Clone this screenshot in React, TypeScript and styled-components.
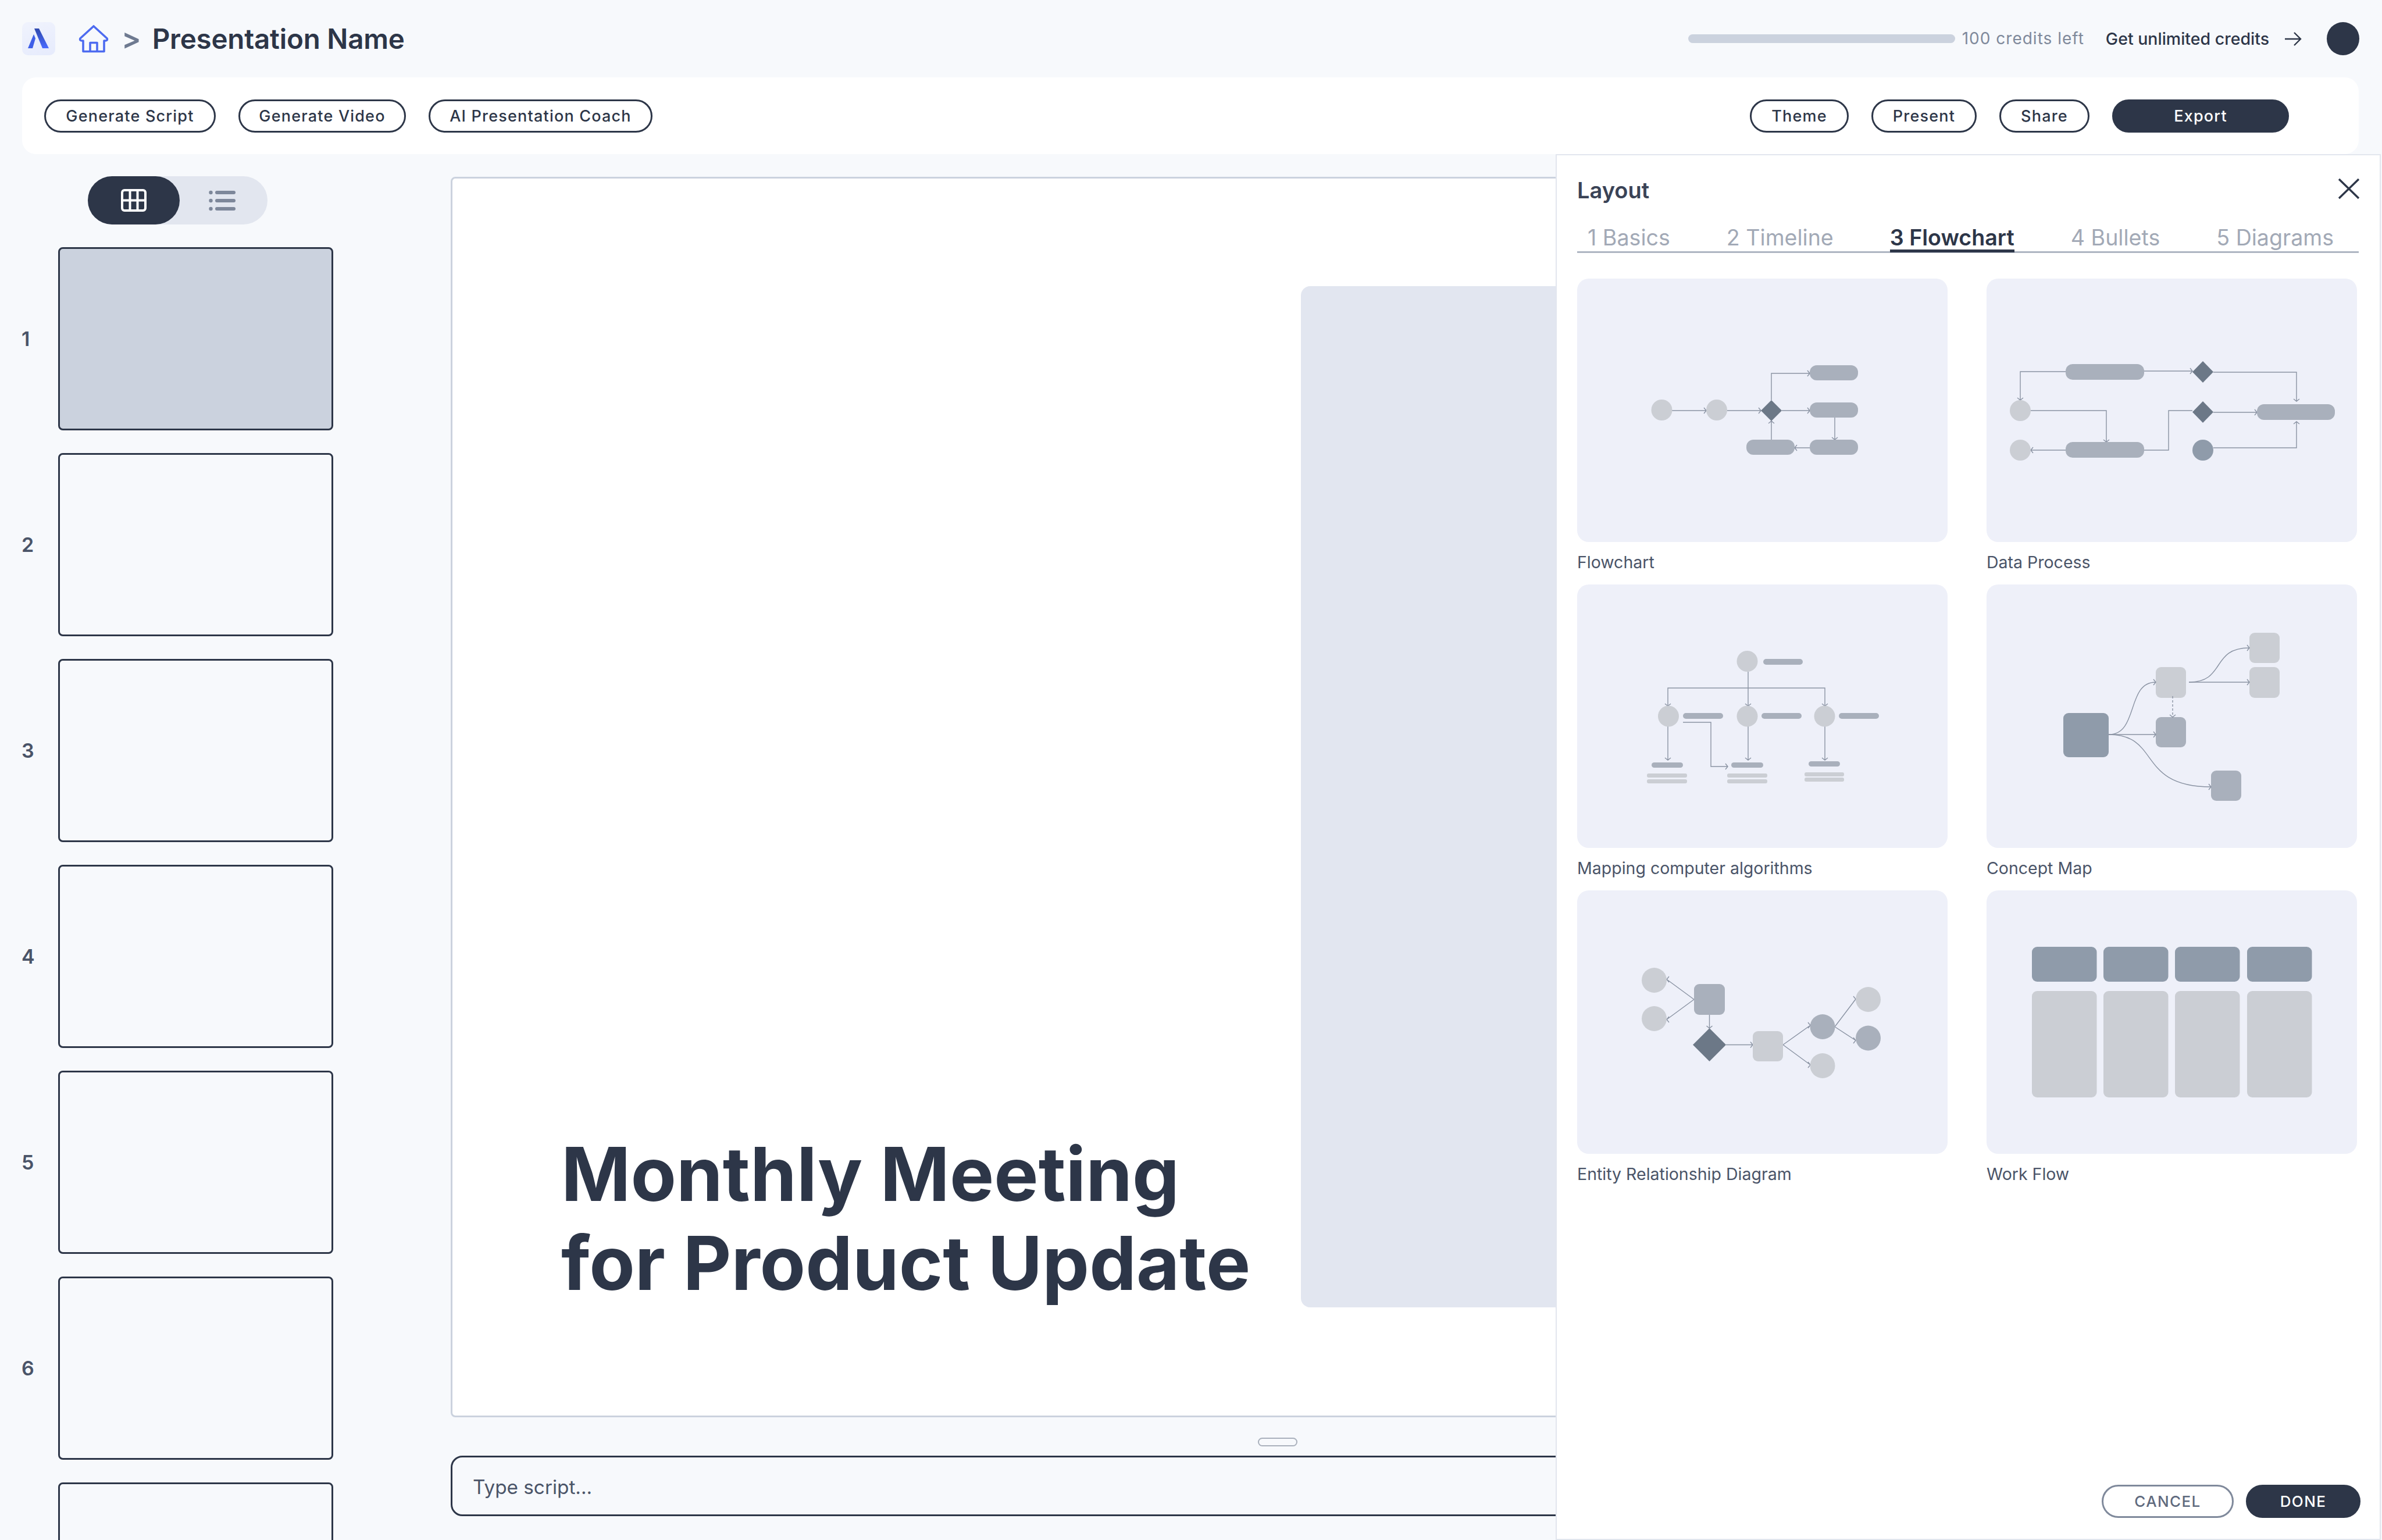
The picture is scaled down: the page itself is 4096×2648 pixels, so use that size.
import React from "react";
import styled, { createGlobalStyle } from "styled-components";

const INK = "#2d3648";
const LINE = "#8a93a3";
const FILL_LIGHT = "#cbced4";
const FILL_MID = "#a9b0bc";
const FILL_STEEL = "#8f9baa";
const FILL_DARK = "#6c7887";

const Global = createGlobalStyle`
  html, body { margin: 0; padding: 0; background: #f7f9fc; }
  body { font-family: Inter, "Noto Sans", sans-serif; color: ${INK}; }
  * { box-sizing: border-box; }
`;

const Page = styled.div`
  position: relative;
  width: 4096px;
  height: 2648px;
  overflow: hidden;
  background: #f7f9fc;
  display: flex;
  flex-direction: column;
`;

const Header = styled.header`
  height: 133px;
  padding: 38px 39px 0 38px;
  display: flex;
  align-items: flex-start;
  flex: none;
`;

const LogoBox = styled.div`
  width: 57px;
  height: 57px;
  border-radius: 10px;
  background: linear-gradient(160deg, #f0f3fd 0%, #e6ebfc 100%);
  margin-right: 40px;
  flex: none;
`;

const HomeMark = styled.svg`
  display: block;
  margin-top: 5px;
  flex: none;
`;

const Crumb = styled.span`
  color: #6e7a90;
  font-size: 50px;
  font-weight: 600;
  line-height: 57px;
  margin: 0 19px 0 22px;
`;

const Title = styled.h1`
  margin: 0;
  font-size: 47.5px;
  font-weight: 600;
  line-height: 57px;
  letter-spacing: -0.2px;
  color: ${INK};
`;

const Spacer = styled.div`
  flex: 1;
`;

const CreditBar = styled.div`
  width: 459px;
  height: 15px;
  margin: 21px 12px 0 0;
  border-radius: 8px;
  background: #cbd2de;
`;

const CreditText = styled.span`
  font-size: 28px;
  line-height: 57px;
  letter-spacing: 1px;
  color: #7f899b;
  margin-right: 37px;
`;

const UnlimitedLink = styled.a`
  font-size: 28.5px;
  font-weight: 500;
  line-height: 57px;
  color: ${INK};
  margin-right: 26px;
`;

const ArrowWrap = styled.div`
  width: 30px;
  height: 57px;
  display: flex;
  align-items: center;
  margin-right: 43px;
`;

const Avatar = styled.div`
  width: 56px;
  height: 57px;
  border-radius: 50%;
  background: ${INK};
`;

const Toolbar = styled.div`
  height: 132px;
  margin: 0 40px 0 38px;
  padding: 38px 120px 0 38px;
  background: #fff;
  border-radius: 24px;
  display: flex;
  align-items: flex-start;
  gap: 39px;
  flex: none;
`;

const PillButton = styled.button<{ $solid?: boolean; $width: number }>`
  width: ${(p) => p.$width}px;
  height: 57px;
  padding: 0;
  border: 3px solid ${INK};
  border-radius: 29px;
  background: ${(p) => (p.$solid ? INK : "#fff")};
  color: ${(p) => (p.$solid ? "#fff" : INK)};
  font-family: inherit;
  font-size: 27px;
  font-weight: 500;
  letter-spacing: 1.2px;
`;

const Main = styled.main`
  flex: 1;
  display: flex;
  min-height: 0;
`;

const Sidebar = styled.aside`
  width: 775px;
  flex: none;
  padding: 38px 0 0 0;
`;

const ViewToggle = styled.div`
  width: 309px;
  height: 83px;
  margin: 0 0 39px 151px;
  border-radius: 42px;
  background: #e2e6ef;
  display: flex;
`;

const ToggleSeg = styled.div<{ $active?: boolean }>`
  width: ${(p) => (p.$active ? 158 : 151)}px;
  height: 83px;
  padding-right: ${(p) => (p.$active ? 0 : 6)}px;
  border-radius: 42px;
  background: ${(p) => (p.$active ? INK : "transparent")};
  display: flex;
  align-items: center;
  justify-content: center;
`;

const SlideList = styled.div`
  display: flex;
  flex-direction: column;
  gap: 39px;
`;

const SlideRow = styled.div`
  display: flex;
  align-items: center;
  height: 315px;
  flex: none;
`;

const SlideNumber = styled.span`
  width: 100px;
  padding-left: 37px;
  font-size: 34px;
  font-weight: 600;
  color: #4a5468;
`;

const SlideThumb = styled.div<{ $active?: boolean }>`
  width: 473px;
  height: 315px;
  border: 3px solid ${INK};
  border-radius: 8px;
  background: ${(p) => (p.$active ? "#cbd2de" : "#f7f9fc")};
`;

const Stage = styled.section`
  width: 2844px;
  flex: none;
  padding-top: 39px;
  display: flex;
  flex-direction: column;
`;

const Canvas = styled.div`
  width: 2844px;
  height: 2133px;
  border: 3px solid #cbd2de;
  border-radius: 8px;
  background: #fff;
  display: flex;
  justify-content: space-between;
  padding: 185px 0 0 187px;
  flex: none;
`;

const Headline = styled.h2`
  margin: 0 0 186px 0;
  align-self: flex-end;
  font-size: 128.2px;
  line-height: 153px;
  font-weight: 700;
  color: ${INK};
`;

const HeroImage = styled.div`
  width: 1100px;
  height: 1756px;
  margin-right: 279px;
  border-radius: 16px;
  background: #e2e6f0;
`;

const Handle = styled.div`
  width: 68px;
  height: 15px;
  margin: 35px auto 16px;
  border: 2px solid #a9b0bc;
  border-radius: 8px;
`;

const ScriptBox = styled.div`
  height: 104px;
  border: 3px solid ${INK};
  border-radius: 20px;
  padding: 3px 0 0 35px;
  display: flex;
  align-items: center;
  font-size: 33.3px;
  color: #4a5468;
  background: #f7f9fc;
`;

const Panel = styled.aside`
  position: absolute;
  left: 2675px;
  top: 265px;
  width: 1419px;
  bottom: 0;
  background: #fff;
  border: 2px solid #e2e6ee;
  padding: 0 36px 0 35px;
  display: flex;
  flex-direction: column;
`;

const PanelHead = styled.div`
  display: flex;
  align-items: center;
  justify-content: space-between;
  height: 114px;
  padding-top: 6px;
`;

const PanelTitle = styled.h3`
  margin: 0;
  font-size: 38px;
  font-weight: 600;
  color: #3a4356;
`;

const CloseGlyph = styled.svg`
  display: block;
  margin: -6px -2px 0 0;
`;

const Tabs = styled.nav`
  height: 54px;
  margin-bottom: 44px;
  padding-left: 18px;
  border-bottom: 3px solid #aeb5c2;
  display: flex;
  gap: 97px;
`;

const Tab = styled.span<{ $active?: boolean }>`
  height: 53px;
  padding-top: 5px;
  font-size: 37.6px;
  line-height: 46px;
  font-weight: ${(p) => (p.$active ? 600 : 400)};
  color: ${(p) => (p.$active ? INK : "#a2a9b6")};
  border-bottom: ${(p) => (p.$active ? `5px solid ${INK}` : "none")};
`;

const Grid = styled.div`
  display: grid;
  grid-template-columns: 637px 637px;
  column-gap: 67px;
  row-gap: 0;
`;

const Card = styled.figure`
  margin: 0;
  height: 526px;
`;

const Thumb = styled.div`
  width: 637px;
  height: 453px;
  background: #eef0f9;
  border-radius: 20px;
`;

const ThumbSvg = styled.svg`
  display: block;
  width: 637px;
  height: 453px;
`;

const Caption = styled.figcaption`
  margin-top: 17px;
  font-size: 28.5px;
  line-height: 36px;
  color: #4a5468;
`;

const PanelFoot = styled.div`
  position: absolute;
  right: 33px;
  bottom: 36px;
  display: flex;
  gap: 21px;
`;

const FootButton = styled.button<{ $solid?: boolean; $width: number }>`
  width: ${(p) => p.$width}px;
  height: 57px;
  padding: 0;
  border: 3px solid ${(p) => (p.$solid ? INK : "#7f899b")};
  border-radius: 29px;
  background: ${(p) => (p.$solid ? INK : "#fff")};
  color: ${(p) => (p.$solid ? "#fff" : "#5f6a7e")};
  font-family: inherit;
  font-size: 26px;
  font-weight: 500;
  letter-spacing: 1.4px;
`;

type Arrow = { d: string; dash?: boolean };

const Wires = ({ items }: { items: Arrow[] }) => (
  <g fill="none" stroke={LINE} strokeWidth={1.4}>
    {items.map((a, i) => (
      <path key={i} d={a.d} strokeDasharray={a.dash ? "4 3" : undefined} />
    ))}
  </g>
);

const chevR = (x: number, y: number) => `M${x - 4} ${y - 5}L${x} ${y}L${x - 4} ${y + 5}`;
const chevL = (x: number, y: number) => `M${x + 4} ${y - 5}L${x} ${y}L${x + 4} ${y + 5}`;
const chevD = (x: number, y: number) => `M${x - 5} ${y - 4}L${x} ${y}L${x + 5} ${y - 4}`;
const chevU = (x: number, y: number) => `M${x - 5} ${y + 4}L${x} ${y}L${x + 5} ${y + 4}`;

const Dot = ({ x, y, r = 18, fill = FILL_LIGHT }: { x: number; y: number; r?: number; fill?: string }) => (
  <ellipse cx={x} cy={y} rx={r} ry={r} fill={fill} />
);

const Diamond = ({ x, y, w = 18, h = 18 }: { x: number; y: number; w?: number; h?: number }) => (
  <polygon points={`${x},${y - h} ${x + w},${y} ${x},${y + h} ${x - w},${y}`} fill={FILL_DARK} />
);

const Block = ({ x, y, w, h, r = 12, fill = FILL_MID }: { x: number; y: number; w: number; h: number; r?: number; fill?: string }) => (
  <rect x={x} y={y} width={w} height={h} rx={r} fill={fill} />
);

const FlowchartArt = () => (
  <ThumbSvg viewBox="0 0 637 453">
    <Wires
      items={[
        { d: `M163 227H222${chevR(222, 227)}` },
        { d: `M258 227H316${chevR(316, 227)}` },
        { d: `M334 209V163H400${chevR(400, 163)}` },
        { d: `M352 227H400${chevR(400, 227)}` },
        { d: `M443 239V277${chevD(443, 277)}` },
        { d: `M400 291H374${chevL(374, 291)}` },
        { d: `M334 277V245${chevU(334, 245)}` },
      ]}
    />
    <Dot x={145.5} y={226} />
    <Dot x={240} y={226} />
    <Diamond x={334} y={227} />
    <Block x={400} y={149} w={83} h={26} />
    <Block x={400} y={213} w={83} h={26} />
    <Block x={400} y={277} w={83} h={26} />
    <Block x={291} y={277} w={83} h={26} />
  </ThumbSvg>
);

const DataProcessArt = () => (
  <ThumbSvg viewBox="0 0 637 453">
    <Wires
      items={[
        { d: `M136 160H58V209${chevD(58, 209)}` },
        { d: `M271 159H354${chevR(354, 159)}` },
        { d: `M390 161H533V211${chevD(533, 211)}` },
        { d: `M76 227H206V281${chevD(206, 281)}` },
        { d: `M136 295H76${chevL(76, 295)}` },
        { d: "M271 295H313V227H354" },
        { d: `M390 230H465${chevR(465, 230)}` },
        { d: `M390 291H533V246${chevU(533, 246)}` },
      ]}
    />
    <Block x={136} y={147} w={135} h={27} />
    <Diamond x={372} y={160.5} h={18.5} />
    <Dot x={58} y={227} />
    <Diamond x={372} y={229.5} h={18.5} />
    <Block x={465} y={216} w={134} h={27} />
    <Dot x={58} y={295} />
    <Block x={136} y={281} w={135} h={27} />
    <Dot x={372} y={295} fill={FILL_STEEL} />
  </ThumbSvg>
);

const MappingArt = () => (
  <ThumbSvg viewBox="0 0 637 453">
    <Wires
      items={[
        { d: "M294 150V178" },
        { d: "M156 209V178H426V209" },
        { d: `M294 178V209${chevD(294, 209)}` },
        { d: chevD(156, 209) },
        { d: chevD(426, 209) },
        { d: `M156 244V302${chevD(156, 302)}` },
        { d: `M294 244V302${chevD(294, 302)}` },
        { d: `M426 244V302${chevD(426, 302)}` },
        { d: `M182 237H230V313H259${chevR(259, 313)}` },
      ]}
    />
    <Dot x={292.5} y={132} />
    <Block x={320} y={128} w={68} h={10} r={5} />
    <Dot x={157} y={226.5} />
    <Dot x={292.5} y={226.5} />
    <Dot x={425.5} y={226.5} />
    <Block x={182} y={221} w={69} h={10} r={5} />
    <Block x={317} y={221} w={69} h={10} r={5} />
    <Block x={450} y={221} w={69} h={10} r={5} />
    <Block x={128} y={306} w={54} h={9} r={4.5} />
    <Block x={265} y={306} w={55} h={9} r={4.5} />
    <Block x={398} y={304} w={54} h={9} r={4.5} />
    <Block x={120} y={325} w={69} h={7} r={3} fill={FILL_LIGHT} />
    <Block x={120} y={335} w={69} h={7} r={3} fill={FILL_LIGHT} />
    <Block x={258} y={325} w={69} h={7} r={3} fill={FILL_LIGHT} />
    <Block x={258} y={335} w={69} h={7} r={3} fill={FILL_LIGHT} />
    <Block x={391} y={323} w={68} h={7} r={3} fill={FILL_LIGHT} />
    <Block x={391} y={332} w={68} h={7} r={3} fill={FILL_LIGHT} />
  </ThumbSvg>
);

const ConceptArt = () => (
  <ThumbSvg viewBox="0 0 637 453">
    <Block x={132} y={221} w={78} h={76} r={9} fill={FILL_STEEL} />
    <Block x={291} y={142} w={52} h={53} r={9} fill={FILL_LIGHT} />
    <Block x={291} y={228} w={52} h={52} r={9} />
    <Block x={386} y={320} w={52} h={52} r={9} />
    <Block x={452} y={83} w={52} h={52} r={9} fill={FILL_LIGHT} />
    <Block x={452} y={142} w={52} h={53} r={9} fill={FILL_LIGHT} />
    <Wires
      items={[
        { d: `M210 258C262 258 240 168 291 168${chevR(291, 168)}` },
        { d: `M210 258H291${chevR(291, 258)}` },
        { d: `M210 258C300 258 258 348 386 348${chevR(386, 348)}` },
        { d: `M348 168C412 168 385 109 452 109${chevR(452, 109)}` },
        { d: `M348 168H452${chevR(452, 168)}` },
        { d: "M320 192V228", dash: true },
        { d: chevD(320, 228) },
      ]}
    />
  </ThumbSvg>
);

const EntityArt = () => (
  <ThumbSvg viewBox="0 0 637 453">
    <Wires
      items={[
        { d: `M201 187.5L154 153${chevL(154, 153)}` },
        { d: `M201 187.5L154 222${chevL(154, 222)}` },
        { d: `M227.5 214V237${chevD(227.5, 237)}` },
        { d: `M256 265.5H302${chevR(302, 265.5)}` },
        { d: `M354 265.5L401 232${chevR(401, 232)}` },
        { d: `M354 265.5L401 300${chevR(401, 300)}` },
        { d: `M443 234.5L479 187${chevR(479, 187)}` },
        { d: `M443 234.5L479 258${chevR(479, 258)}` },
      ]}
    />
    <Dot x={132.5} y={154.5} r={21.5} />
    <Dot x={132.5} y={220.5} r={21.5} />
    <Block x={201} y={161} w={53} h={53} r={9} />
    <Diamond x={227.5} y={265.5} w={28.5} h={28.5} />
    <Block x={302} y={242} w={52} h={52} r={9} fill={FILL_LIGHT} />
    <Dot x={422} y={234.5} r={21.5} fill={FILL_MID} />
    <Dot x={422} y={301.5} r={21.5} />
    <Dot x={500.5} y={187.5} r={21.5} />
    <Dot x={500.5} y={254} r={21.5} fill={FILL_MID} />
  </ThumbSvg>
);

const WorkFlowArt = () => (
  <ThumbSvg viewBox="0 0 637 453">
    {[78, 201, 324, 448].map((x) => (
      <React.Fragment key={x}>
        <Block x={x} y={97} w={111.5} h={60} r={9} fill={FILL_STEEL} />
        <Block x={x} y={173} w={111.5} h={183} r={9} fill={FILL_LIGHT} />
      </React.Fragment>
    ))}
  </ThumbSvg>
);

const layouts: { name: string; Art: React.FC }[] = [
  { name: "Flowchart", Art: FlowchartArt },
  { name: "Data Process", Art: DataProcessArt },
  { name: "Mapping computer algorithms", Art: MappingArt },
  { name: "Concept Map", Art: ConceptArt },
  { name: "Entity Relationship Diagram", Art: EntityArt },
  { name: "Work Flow", Art: WorkFlowArt },
];

const leftButtons = [
  { label: "Generate Script", width: 295 },
  { label: "Generate Video", width: 288 },
  { label: "AI Presentation Coach", width: 385 },
];

const rightButtons = [
  { label: "Theme", width: 170 },
  { label: "Present", width: 181 },
  { label: "Share", width: 155 },
];

const tabs = ["1 Basics", "2 Timeline", "3 Flowchart", "4 Bullets", "5 Diagrams"];

export default function App() {
  return (
    <Page>
      <Global />
      <Header>
        <LogoBox>
          <svg width="57" height="57" viewBox="0 0 57 57">
            <defs>
              <linearGradient id="logoG" x1="0" y1="0" x2="0" y2="1">
                <stop offset="0" stopColor="#2f49ae" />
                <stop offset="1" stopColor="#4a6cff" />
              </linearGradient>
            </defs>
            <path d="M21 11H29L46 45H35Z" fill="url(#logoG)" />
            <path d="M20 21L23 28L18 45H10Z" fill="#3f5fe8" />
          </svg>
        </LogoBox>
        <HomeMark width="52" height="48" viewBox="0 0 52 48" fill="none" stroke="#4d6bf0" strokeWidth="3.6" strokeLinejoin="round">
          <path d="M26 2L49 23Q50.5 27 46 27H44V45.5H8V27H6Q1.5 27 3 23Z" />
          <path d="M20 45.5V30.5H32V45.5" />
        </HomeMark>
        <Crumb>&gt;</Crumb>
        <Title>Presentation Name</Title>
        <Spacer />
        <CreditBar />
        <CreditText>100 credits left</CreditText>
        <UnlimitedLink>Get unlimited credits</UnlimitedLink>
        <ArrowWrap>
          <svg width="30" height="26" viewBox="0 0 30 26" fill="none" stroke={INK} strokeWidth="2.4">
            <path d="M1 13H28M17 2L28 13L17 24" />
          </svg>
        </ArrowWrap>
        <Avatar />
      </Header>
      <Toolbar>
        {leftButtons.map((b) => (
          <PillButton key={b.label} $width={b.width}>{b.label}</PillButton>
        ))}
        <Spacer />
        {rightButtons.map((b) => (
          <PillButton key={b.label} $width={b.width}>{b.label}</PillButton>
        ))}
        <PillButton $solid $width={304}>Export</PillButton>
      </Toolbar>
      <Main>
        <Sidebar>
          <ViewToggle>
            <ToggleSeg $active>
              <svg width="44" height="39" viewBox="0 0 44 39" fill="none" stroke="#fff" strokeWidth="4">
                <rect x="2" y="2" width="40" height="35" rx="4" />
                <path d="M15.5 2V37M28.5 2V37M2 19.5H42" />
              </svg>
            </ToggleSeg>
            <ToggleSeg>
              <svg width="46" height="36" viewBox="0 0 46 36" fill="#7d879a">
                <circle cx="3.5" cy="4" r="3.2" />
                <circle cx="3.5" cy="18" r="3.2" />
                <circle cx="3.5" cy="32" r="3.2" />
                <rect x="11" y="1" width="35" height="6" rx="3" />
                <rect x="11" y="15" width="35" height="6" rx="3" />
                <rect x="11" y="29" width="35" height="6" rx="3" />
              </svg>
            </ToggleSeg>
          </ViewToggle>
          <SlideList>
            {[1, 2, 3, 4, 5, 6, 7].map((n) => (
              <SlideRow key={n}>
                <SlideNumber>{n <= 6 ? n : ""}</SlideNumber>
                <SlideThumb $active={n === 1} />
              </SlideRow>
            ))}
          </SlideList>
        </Sidebar>
        <Stage>
          <Canvas>
            <Headline>
              Monthly Meeting
              <br />
              for Product Update
            </Headline>
            <HeroImage />
          </Canvas>
          <Handle />
          <ScriptBox>Type script...</ScriptBox>
        </Stage>
      </Main>
      <Panel>
        <PanelHead>
          <PanelTitle>Layout</PanelTitle>
          <CloseGlyph width="38" height="37" viewBox="0 0 38 37" stroke={INK} strokeWidth="3.4" fill="none">
            <path d="M2 2L36 35M36 2L2 35" />
          </CloseGlyph>
        </PanelHead>
        <Tabs>
          {tabs.map((t) => (
            <Tab key={t} $active={t === "3 Flowchart"}>{t}</Tab>
          ))}
        </Tabs>
        <Grid>
          {layouts.map(({ name, Art }) => (
            <Card key={name}>
              <Thumb><Art /></Thumb>
              <Caption>{name}</Caption>
            </Card>
          ))}
        </Grid>
        <PanelFoot>
          <FootButton $width={227}>CANCEL</FootButton>
          <FootButton $solid $width={197}>DONE</FootButton>
        </PanelFoot>
      </Panel>
    </Page>
  );
}
